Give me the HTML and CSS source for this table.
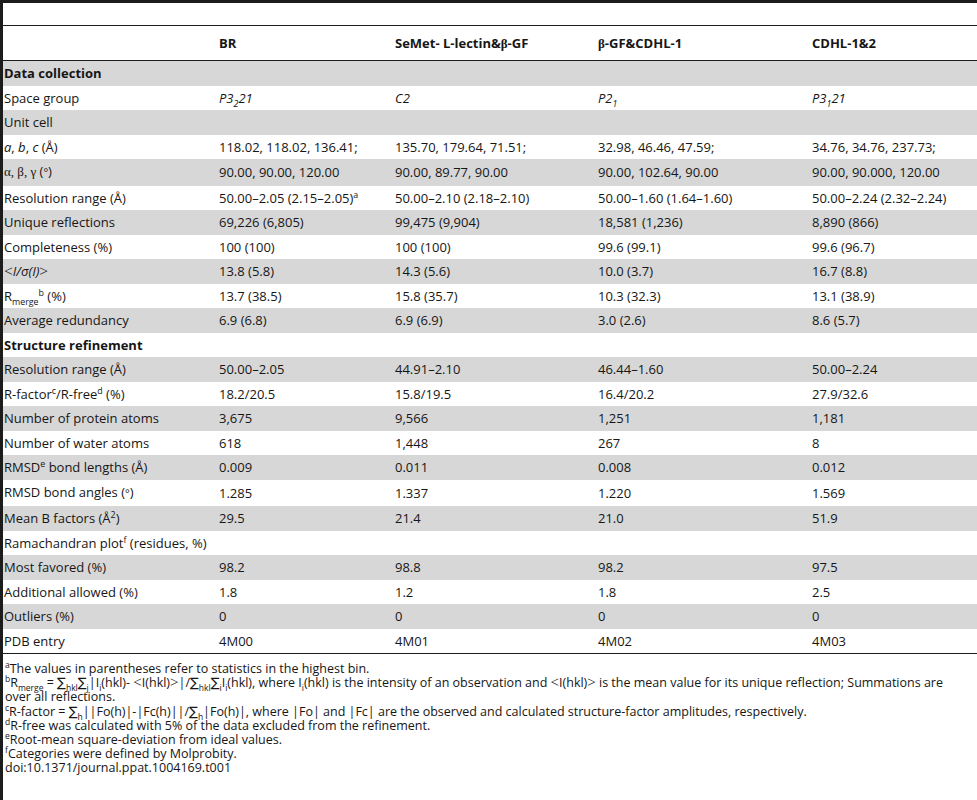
FILE: index.html
```html
<!doctype html>
<html lang="en">
 <head>
  <meta charset="utf-8">
  <title>Table 1. Data collection and refinement statistics</title>
  <link rel="stylesheet" href="styles.css">
 </head>
 <body>
  <div class="sheet">
   <table class="stats">
    <colgroup>
     <col class="col-label">
     <col class="col-br">
     <col class="col-semet">
     <col class="col-bgf">
     <col class="col-cdhl">
    </colgroup>
    <thead>
     <tr class="spacer"><th colspan="5"></th></tr>
     <tr class="head">
      <th></th>
      <th>BR</th>
      <th>SeMet- L-lectin&amp;<span class="greek">β</span>-GF</th>
      <th><span class="greek">β</span>-GF&amp;CDHL-1</th>
      <th>CDHL-1&amp;2</th>
     </tr>
    </thead>
    <tbody>
     <tr class="section"><td colspan="5">Data collection</td></tr>
     <tr><td>Space group</td><td><i>P3<sub>2</sub>21</i></td><td><i>C2</i></td><td><i>P2<sub>1</sub></i></td><td><i>P3<sub>1</sub>21</i></td></tr>
     <tr><td colspan="5">Unit cell</td></tr>
     <tr><td><i>a</i>, <i>b</i>, <i>c</i> (Å)</td><td>118.02, 118.02, 136.41;</td><td>135.70, 179.64, 71.51;</td><td>32.98, 46.46, 47.59;</td><td>34.76, 34.76, 237.73;</td></tr>
     <tr><td><span class="greek">α, β, γ</span> (<span class="deg">°</span>)</td><td>90.00, 90.00, 120.00</td><td>90.00, 89.77, 90.00</td><td>90.00, 102.64, 90.00</td><td>90.00, 90.000, 120.00</td></tr>
     <tr><td>Resolution range (Å)</td><td>50.00–2.05 (2.15–2.05)<sup>a</sup></td><td>50.00–2.10 (2.18–2.10)</td><td>50.00–1.60 (1.64–1.60)</td><td>50.00–2.24 (2.32–2.24)</td></tr>
     <tr><td>Unique reflections</td><td>69,226 (6,805)</td><td>99,475 (9,904)</td><td>18,581 (1,236)</td><td>8,890 (866)</td></tr>
     <tr><td>Completeness (%)</td><td>100 (100)</td><td>100 (100)</td><td>99.6 (99.1)</td><td>99.6 (96.7)</td></tr>
     <tr><td><span class="op">&lt;</span><i>I/σ(I)</i><span class="op">&gt;</span></td><td>13.8 (5.8)</td><td>14.3 (5.6)</td><td>10.0 (3.7)</td><td>16.7 (8.8)</td></tr>
     <tr><td>R<sub>merge</sub><sup>b</sup> (%)</td><td>13.7 (38.5)</td><td>15.8 (35.7)</td><td>10.3 (32.3)</td><td>13.1 (38.9)</td></tr>
     <tr><td>Average redundancy</td><td>6.9 (6.8)</td><td>6.9 (6.9)</td><td>3.0 (2.6)</td><td>8.6 (5.7)</td></tr>
     <tr class="section"><td colspan="5">Structure refinement</td></tr>
     <tr><td>Resolution range (Å)</td><td>50.00–2.05</td><td>44.91–2.10</td><td>46.44–1.60</td><td>50.00–2.24</td></tr>
     <tr><td>R-factor<sup>c</sup>/R-free<sup>d</sup> (%)</td><td>18.2/20.5</td><td>15.8/19.5</td><td>16.4/20.2</td><td>27.9/32.6</td></tr>
     <tr><td>Number of protein atoms</td><td>3,675</td><td>9,566</td><td>1,251</td><td>1,181</td></tr>
     <tr><td>Number of water atoms</td><td>618</td><td>1,448</td><td>267</td><td>8</td></tr>
     <tr><td>RMSD<sup>e</sup> bond lengths (Å)</td><td>0.009</td><td>0.011</td><td>0.008</td><td>0.012</td></tr>
     <tr><td>RMSD bond angles (<span class="deg">°</span>)</td><td>1.285</td><td>1.337</td><td>1.220</td><td>1.569</td></tr>
     <tr><td>Mean B factors (Å<sup>2</sup>)</td><td>29.5</td><td>21.4</td><td>21.0</td><td>51.9</td></tr>
     <tr><td colspan="5">Ramachandran plot<sup>f</sup> (residues, %)</td></tr>
     <tr><td>Most favored (%)</td><td>98.2</td><td>98.8</td><td>98.2</td><td>97.5</td></tr>
     <tr><td>Additional allowed (%)</td><td>1.8</td><td>1.2</td><td>1.8</td><td>2.5</td></tr>
     <tr><td>Outliers (%)</td><td>0</td><td>0</td><td>0</td><td>0</td></tr>
     <tr><td>PDB entry</td><td>4M00</td><td>4M01</td><td>4M02</td><td>4M03</td></tr>
    </tbody>
   </table>
   <div class="notes">
    <p><sup>a</sup>The values in parentheses refer to statistics in the highest bin.</p>
    <p><sup>b</sup>R<sub>merge</sub> = <span class="sum">∑</span><sub>hkl</sub><span class="sum">∑</span><sub>j</sub>|I<sub>i</sub>(hkl)- <span class="op">&lt;</span>I(hkl)<span class="op">&gt;</span>|/<span class="sum">∑</span><sub>hkl</sub><span class="sum">∑</span><sub>i</sub>I<sub>i</sub>(hkl), where I<sub>i</sub>(hkl) is the intensity of an observation and <span class="op">&lt;</span>I(hkl)<span class="op">&gt;</span> is the mean value for its unique reflection; Summations are<br>over all reflections.</p>
    <p><sup>c</sup>R-factor = <span class="sum">∑</span><sub>h</sub>||Fo(h)|-|Fc(h)||/<span class="sum">∑</span><sub>h</sub>|Fo(h)|, where |Fo| and |Fc| are the observed and calculated structure-factor amplitudes, respectively.</p>
    <p><sup>d</sup>R-free was calculated with 5% of the data excluded from the refinement.</p>
    <p><sup>e</sup>Root-mean square-deviation from ideal values.</p>
    <p><sup>f</sup>Categories were defined by Molprobity.</p>
    <p>doi:10.1371/journal.ppat.1004169.t001</p>
   </div>
  </div>
 </body>
</html>
```

FILE: styles.css
```css
	body {
		margin: 0;
		padding: 0;
		background-color: #ffffff;
		color: #161616;
		font-family: 'Open Sans', 'Noto Sans', sans-serif;
	}

	/* the table image is cropped: only the top and left rules show */
	.sheet {
		border-top: 3px solid #1c1c1c;
		border-left: 3px solid #1c1c1c;
		min-height: 797px;
	}

	.stats {
		width: 100%;
		table-layout: fixed;
		border-collapse: collapse;
		font-size: 13px;
	}

	.col-label { width: 215px; }
	.col-br { width: 176px; }
	.col-semet { width: 203px; }
	.col-bgf { width: 214px; }

	.stats th,
	.stats td {
		padding: 0 0 0 1px;
		text-align: left;
		white-space: nowrap;
		vertical-align: middle;
	}

	.stats .spacer th {
		height: 22px;
		border-bottom: 1px solid #1c1c1c;
	}

	.stats .head th {
		height: 34px;
		font-weight: bold;
		border-bottom: 1px solid #1c1c1c;
	}

	.stats tbody td {
		height: 24.5px;
		line-height: 24.5px;
	}

	.stats tbody tr:nth-child(odd) {
		background-color: #d7d7d7;
	}

	.stats tbody tr:last-child td {
		border-bottom: 1px solid #1c1c1c;
	}

	.stats .section td {
		font-weight: bold;
	}

	sub, sup {
		font-size: 0.68em;
		line-height: 0;
	}

	.greek, .op, .deg {
		font-family: 'Liberation Serif', serif;
	}

	.op {
		font-size: 1.2em;
	}

	.deg {
		font-size: 0.9em;
	}

	.notes {
		padding: 8px 0 0 2px;
		font-size: 12.5px;
		line-height: 14.2px;
	}

	.notes p {
		margin: 0;
	}

	/* keep the formula glyphs from stretching the footnote lines */
	.notes .op,
	.notes .sum,
	.notes sub,
	.notes sup {
		line-height: 0;
	}

	.sum {
		font-family: 'DejaVu Sans', sans-serif;
		font-size: 1.05em;
	}
```
